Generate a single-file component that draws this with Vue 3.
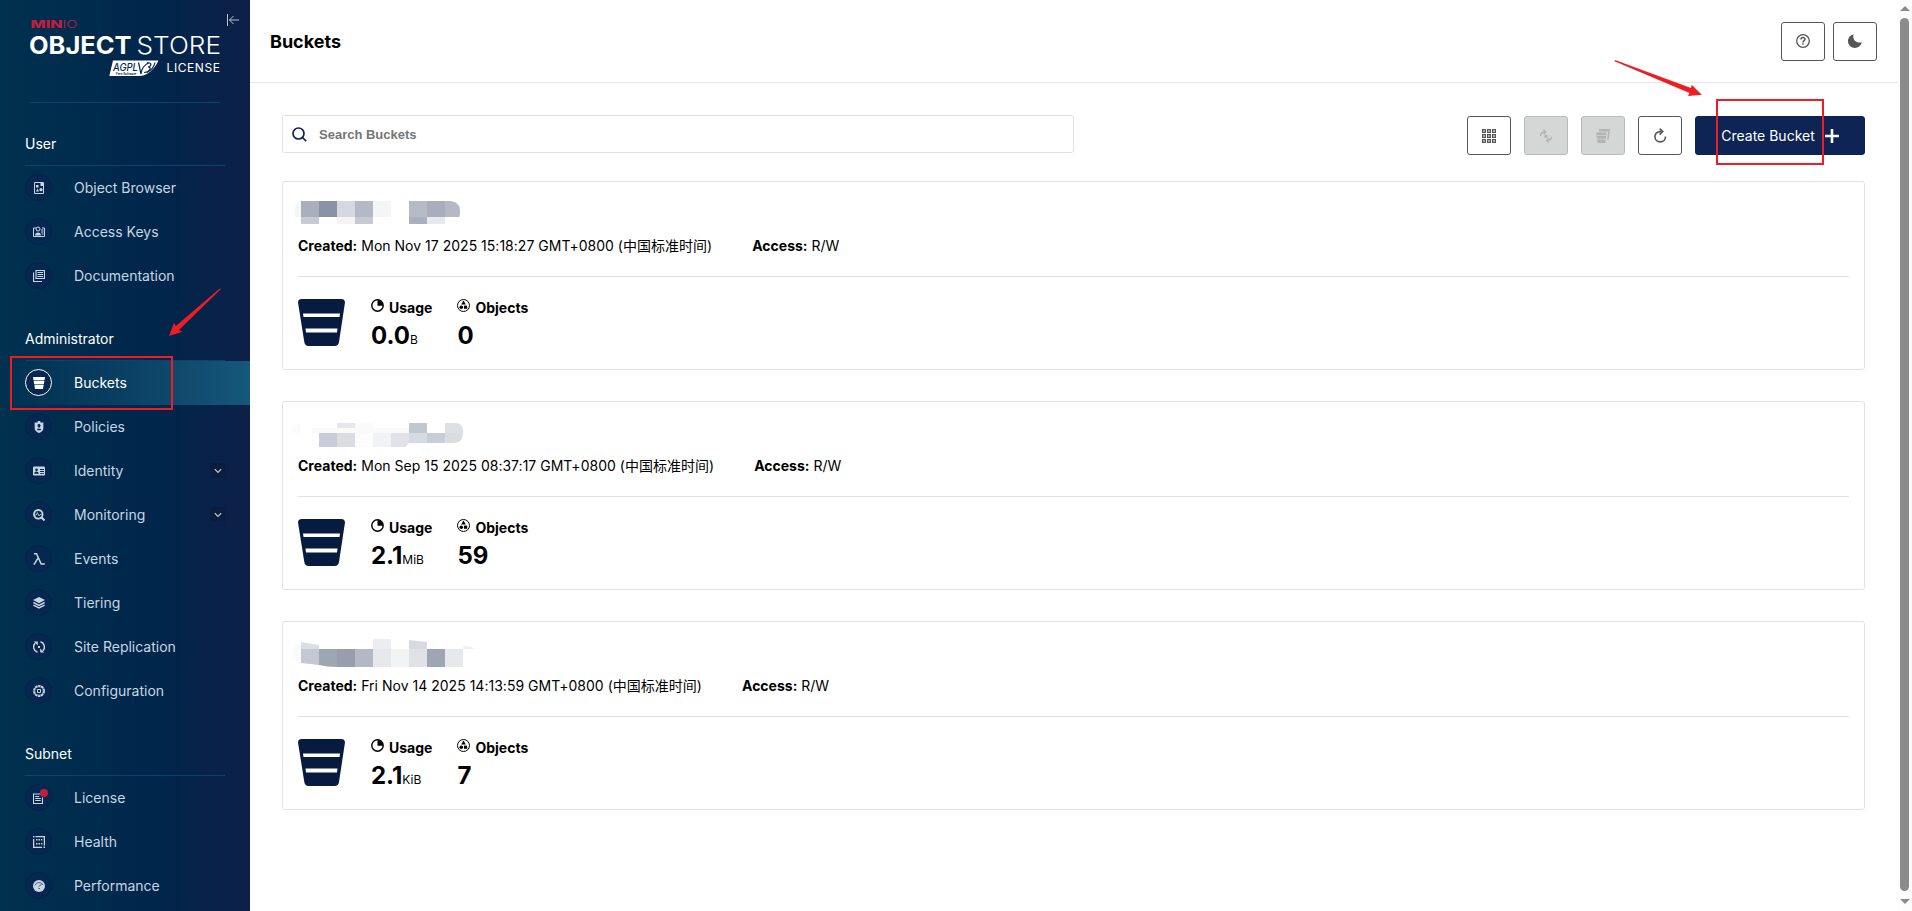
<template>
  <div class="layout">
    <aside class="sidebar">
      <div class="logo-box">
        <svg class="logo" width="190" height="60" viewBox="0 0 190 60">
          <text x="0.500" y="11.500" class="logo-minio heavy" textLength="32" lengthAdjust="spacingAndGlyphs">MIN</text>
          <text x="32.500" y="11.500" class="logo-minio light" textLength="15" lengthAdjust="spacingAndGlyphs">IO</text>
          <text x="-1" y="37.500" class="logo-name heavy" textLength="102.500" lengthAdjust="spacingAndGlyphs">OBJECT</text>
          <text x="106.500" y="37.500" class="logo-name light" textLength="84.500" lengthAdjust="spacingAndGlyphs">STORE</text>
          <path d="M83 44.500h45.500C124 54 117 60 109 60H79.300z" fill="#fff" />
          <text x="83" y="55.200" class="logo-agpl" textLength="25" lengthAdjust="spacingAndGlyphs">AGPL</text>
          <text x="86" y="59" class="logo-free">Free Software</text>
          <path d="M108.500 46.500l2.500 11.500c0-5 4-10 8-11M117 46.800c5-.5 5 3.200 1 4.200c4.500 0 1.500 5.500-4 5.500M125 46.500c-1 5-4 8-8 10" fill="none" stroke="#062a50" stroke-width="1.200" />
          <text x="136.500" y="55.500" class="logo-license" textLength="53.500">LICENSE</text>
        </svg>
        <button class="collapse" type="button" aria-label="collapse">
          <svg width="12" height="12" viewBox="0 0 12 12" fill="none" stroke="#b5c2cf" stroke-width="1">
            <path d="M.5 0v12M2.500 6H12M6.500 2L2.500 6l4 4" />
          </svg>
        </button>
      </div>

      <nav v-for="section in sections" :key="section.title">
        <div class="section-title">{{ section.title }}</div>
        <a
          v-for="item in section.items"
          :key="item.name"
          class="menu-item"
          :class="{ active: item.name === current }"
          @click="current = item.name"
        >
          <span class="menu-icon">
            <svg width="12" height="12" viewBox="0 0 12 12" v-html="icons[item.icon]"></svg>
            <i v-if="item.badge" class="badge"></i>
          </span>
          <span class="menu-label">{{ item.name }}</span>
          <span v-if="item.group" class="expand">
            <svg width="8" height="6" viewBox="0 0 8 6" fill="none" stroke="#c8d3de" stroke-width="1.100">
              <path d="M.8 1.200L4 4.400l3.200-3.200" />
            </svg>
          </span>
        </a>
      </nav>
    </aside>

    <main class="content">
      <header class="page-header">
        <h1>Buckets</h1>
        <div class="header-actions">
          <button class="btn" type="button" aria-label="help">
            <svg width="14" height="14" viewBox="0 0 14 14" fill="none" stroke="#555756" stroke-width="1.300">
              <circle cx="7" cy="7" r="6.300" />
              <path d="M5 5.500c0-2.500 4-2.500 4-.2C9 6.800 7 6.600 7 8.400M7 9.300v1.500" stroke-width="1.500" />
            </svg>
          </button>
          <button class="btn" type="button" aria-label="dark mode">
            <svg width="14" height="14" viewBox="0 0 14 14" fill="#555756">
              <path d="M5.500.2C4.200 5.500 8 9.500 13.900 8.400 12.800 11.800 10 13.900 6.900 13.900 3 13.900 0 10.900 0 7.200 0 3.900 2.200 1 5.500.2z" />
            </svg>
          </button>
        </div>
      </header>

      <section class="page-body">
        <div class="toolbar">
          <div class="search">
            <svg width="15" height="15" viewBox="0 0 15 15" fill="none" stroke="#0d2454" stroke-width="1.700">
              <circle cx="6.500" cy="6.500" r="5.500" />
              <path d="M10.500 10.500l3.700 3.700" />
            </svg>
            <input v-model="filter" placeholder="Search Buckets" />
          </div>
          <div class="actions">
            <button class="btn" type="button" aria-label="grid view">
              <svg width="14" height="14" viewBox="0 0 14 14" fill="none" stroke="#555756" stroke-width="1.300">
                <template v-for="r in 3" :key="r">
                  <rect v-for="c in 3" :key="c" :x="c * 5 - 4.350" :y="r * 5 - 4.350" width="2.700" height="2.700" />
                </template>
              </svg>
            </button>
            <button class="btn" type="button" disabled aria-label="replication">
              <svg width="14" height="14" viewBox="0 0 14 14" fill="none" stroke="#b2b4b3" stroke-width="1.300">
                <path d="M1.500 7C1.500 4.500 3 3 6 3M4.500.8L6.800 3 4.500 5.300M12.500 7.500c0 3-1.700 4-4.500 4M10 9L7.800 11.400 10 13.500" />
                <circle cx="7" cy="7.200" r="1.700" fill="#b2b4b3" stroke="none" />
              </svg>
            </button>
            <button class="btn" type="button" disabled aria-label="lifecycle">
              <svg width="14" height="14" viewBox="0 0 14 14" fill="#b2b4b3">
                <path d="M3 0h11l-1.500 11h-1.300L12 2.500H3zM0 3.500h10.500l-.3 2.700H.3zM.5 7h9.600l-.2 2.700H.9zM1 10.500h8.700L9.300 14H1.500z" />
              </svg>
            </button>
            <button class="btn" type="button" aria-label="refresh">
              <svg width="13" height="15" viewBox="0 0 13 15" fill="none" stroke="#555756" stroke-width="1.600">
                <path d="M7.500 3.600H6.200C3 3.600.9 6 .9 8.600c0 3 2.300 5.300 5.300 5.300s5.300-2.300 5.300-5.300" />
                <path d="M5.600.6l3.100 3-3.100 3" />
              </svg>
            </button>
            <button class="btn primary" type="button">
              <span>Create Bucket</span>
              <svg width="14" height="14" viewBox="0 0 14 14" stroke="#fff" stroke-width="2.600">
                <path d="M7 0v14M0 7h14" />
              </svg>
            </button>
          </div>
        </div>

        <article v-for="bucket in buckets" :key="bucket.created" class="bucket">
          <svg class="bucket-name" width="190" height="34" viewBox="288 0 190 34">
            <path v-for="(b, i) in bucket.blocks" :key="i" :d="b[0]" :fill="b[1]" />
          </svg>
          <div class="bucket-info">
            <span class="created"><b>Created:</b> {{ bucket.created }}</span>
            <span><b>Access:</b> {{ bucket.access }}</span>
          </div>
          <div class="bucket-stats">
            <svg width="47" height="47" viewBox="0 0 47 47">
              <path d="M4 0h39q4.300 0 3.900 4L41 43q-.6 4-4.500 4h-26Q7 47 6.300 43L.1 4Q-.3 0 4 0z" fill="#071a40" />
              <path d="M5 14.500h37l-.5 3.500h-36zM7.500 29.500h32l-.5 4h-31z" fill="#fff" />
            </svg>
            <div class="stat usage">
              <div class="stat-label">
                <svg width="13" height="13" viewBox="0 0 13 13">
                  <circle cx="6.500" cy="6.500" r="5.700" fill="none" stroke="#000" stroke-width="1.400" />
                  <path d="M6.500 6.800V1A5.500 5.500 0 0 1 12 6.800z" />
                </svg>
                Usage
              </div>
              <div class="stat-value">{{ bucket.usage }}<small>{{ bucket.unit }}</small></div>
            </div>
            <div class="stat">
              <div class="stat-label">
                <svg width="13" height="13" viewBox="0 0 13 13">
                  <circle cx="6.500" cy="6.500" r="6" fill="none" stroke="#000" />
                  <path d="M6.500 1.600l2.300 4H4.200z" />
                  <circle cx="4.300" cy="8.200" r="1.800" />
                  <rect x="7" y="6.600" width="3.200" height="3.200" />
                </svg>
                Objects
              </div>
              <div class="stat-value">{{ bucket.objects }}</div>
            </div>
          </div>
        </article>
      </section>
    </main>

    <div class="scrollbar">
      <i class="up"></i>
      <div class="thumb"></div>
      <i class="down"></i>
    </div>

    <!-- marks over the page -->
    <div class="mark mark-menu"></div>
    <div class="mark mark-create"></div>
    <svg class="arrows" width="1912" height="911" viewBox="0 0 1912 911" fill="#ee1c24">
      <path d="M220 288.300L175.800 326l-1.800-3.300-5 13.300 13.500-4.300-3.500-1.700L220.700 289.300z" />
      <path d="M1615 60L1691 88l.7-3.200 10.100 10-13.800 1.300 1.500-3.100L1614.500 61.300z" />
    </svg>
  </div>
</template>

<script setup>
import { ref } from 'vue'

const current = ref('Buckets')
const filter = ref('')

const sections = [
  {
    title: 'User',
    items: [
      { name: 'Object Browser', icon: 'browser' },
      { name: 'Access Keys', icon: 'keys' },
      { name: 'Documentation', icon: 'docs' }
    ]
  },
  {
    title: 'Administrator',
    items: [
      { name: 'Buckets', icon: 'bucket' },
      { name: 'Policies', icon: 'policy' },
      { name: 'Identity', icon: 'identity', group: true },
      { name: 'Monitoring', icon: 'monitoring', group: true },
      { name: 'Events', icon: 'lambda' },
      { name: 'Tiering', icon: 'tiers' },
      { name: 'Site Replication', icon: 'replication' },
      { name: 'Configuration', icon: 'config' }
    ]
  },
  {
    title: 'Subnet',
    items: [
      { name: 'License', icon: 'license', badge: true },
      { name: 'Health', icon: 'health' },
      { name: 'Performance', icon: 'performance' }
    ]
  }
]

const icons = {
  browser:
    '<path d="M1.500.5h9v11h-9z" fill="none" stroke="currentColor"/><path d="M3 3h2.500v2.500H3zM3 9.500l1.500-3 1.500 3zM7.500 1h3v3h-3z"/><circle cx="8" cy="7.700" r="1.600"/>',
  keys:
    '<path d="M3 2H.5v8.500h11V2H9" fill="none" stroke="currentColor"/><circle cx="5" cy="3" r="2" fill="none" stroke="currentColor"/><path d="M2 9.500c0-4 6-4 6 0zM8 3.500h2.500v1H8zM8 5.500h2.500v1H8zM8.500 7.500h2v1h-2z"/>',
  docs:
    '<path d="M3 .5h8.500v8H3zM.5 2.500v9H9" fill="none" stroke="currentColor" stroke-width="1.200"/><path d="M4.500 2h5.500v1H4.500zM4.500 4h5.500v1H4.500zM4.500 6h5.500v1H4.500z"/>',
  bucket:
    '<path d="M0 0h12l-.5 3H.5z"/><path d="M.7 4h10.600l-.4 3H1.100z"/><path d="M1.400 8h9.200L10 12H2z"/><path d="M.6 3h10.800v1H.6zM1.200 7h9.600v1H1.200z" opacity=".4"/>',
  policy:
    '<path d="M4.500 0h3v1.500H11V7c0 2.500-2 4-5 5-3-1-5-2.500-5-5V1.500h3.500z" transform="translate(.8) scale(.87 1)"/><path d="M4.200 8.500h3.600M6 3.200v3.500" stroke="#062450" stroke-width="1.300"/><circle cx="6" cy="4.500" r="1.500" fill="#062450"/>',
  identity:
    '<rect y="1.500" width="12" height="9" rx="1.200"/><circle cx="3.500" cy="4.700" r="1.300" fill="#062450"/><path d="M1.300 8.800c0-3 4.400-3 4.400 0zM7 4h4v1H7zM7 6h4v1H7zM7 8h4v.8H7z" fill="#062450"/>',
  monitoring:
    '<circle cx="5.300" cy="5.300" r="4.300" fill="none" stroke="currentColor" stroke-width="1.800"/><path d="M8.300 8.300l3.200 3.200" stroke="currentColor" stroke-width="2"/><path d="M2 6h1.300l1-2.500L6 7l1-1.500h1.500" fill="none" stroke="currentColor" stroke-width=".8"/>',
  lambda:
    '<path d="M1 .7h2.500l4.700 10.300h3.600M5.300 4.700L.9 11.700" fill="none" stroke="currentColor" stroke-width="1.500"/>',
  tiers:
    '<path d="M6 0l6 3-6 3.200L0 3z"/><path d="M.4 5.500L6 8.300l5.600-2.800M.4 8.200L6 11l5.600-2.800" fill="none" stroke="currentColor" stroke-width="1.500"/>',
  replication:
    '<path d="M4.500 11.200A5.300 5.300 0 0 1 2.200 2.300M7.500.8a5.300 5.300 0 0 1 2.300 8.900" fill="none" stroke="currentColor" stroke-width="1.500"/><path d="M.8.600h4v4zM11.200 11.400h-4v-4zM5 5h2v2H5z"/>',
  config:
    '<circle cx="6" cy="6" r="5.100" fill="none" stroke="currentColor" stroke-width="1.700" stroke-dasharray="2.600 .6"/><circle cx="6" cy="6" r="4.100" fill="none" stroke="currentColor" stroke-width=".6"/><path d="M4.500 4.500h3v3h-3z" fill="none" stroke="currentColor"/>',
  license:
    '<path d="M8 2H.5v9.500h9V5.500" fill="none" stroke="currentColor" stroke-width="1.100"/><path d="M2.200 4h4v1h-4zM2.200 6h5.600v1H2.200zM2.200 8h5.600v1H2.200z"/>',
  health:
    '<path d="M2.500.6h8.900v9M.6 3v8.400H9" fill="none" stroke="currentColor" stroke-width="1.300"/><path d="M0 0h1.500v1.500H0zM10.500 10.500H12V12h-1.500zM3 3h1.500v1.500H3zM5.500 3H7v1.500H5.500zM8 3h1.300v1.500H8zM3 7h1.500v1.500H3zM5.500 7H7v1.500H5.500zM8 7h1.300v1.500H8z"/>',
  performance:
    '<circle cx="6" cy="6" r="6"/><path d="M2 5.500A4.300 4.300 0 0 1 10 5M5.600 6.500L8.500 4.500M5.500 8.500h1.500" fill="none" stroke="#3b5677" stroke-width=".9"/>'
}

// bucket names are masked, each block is [path, color]
const buckets = [
  {
    created: 'Mon Nov 17 2025 15:18:27 GMT+0800 (中国标准时间)',
    access: 'R/W',
    usage: '0.0',
    unit: 'B',
    objects: 0,
    blocks: [
      ['M301 4v16h-6v-9q0-6 6-7z', '#f5f6f8'],
      ['M301 4h18v16h-18z', '#aaafbd'],
      ['M319 4h18v16h-18z', '#8a93a3'],
      ['M337 4h18v16h-18z', '#d5d8e0'],
      ['M355 4h18v16h-18z', '#b5b9c5'],
      ['M373 4h18v16h-18z', '#f4f5f7'],
      ['M409 4h18v16h-18z', '#b4bbc5'],
      ['M427 4h18v16h-18z', '#aaaebc'],
      ['M445 4h6q9 2 9 9v4q0 2-1 3h-14z', '#b6b9c5'],
      ['M301 20h18v7h-18z', '#c7cad5'],
      ['M337 20h18v7h-18z', '#f4f4f7'],
      ['M355 20h18v7h-18z', '#c7cad5'],
      ['M409 20h18v7h-18z', '#aaafbd'],
      ['M427 20h18v7h-18z', '#e8e9ee']
    ]
  },
  {
    created: 'Mon Sep 15 2025 08:37:17 GMT+0800 (中国标准时间)',
    access: 'R/W',
    usage: '2.1',
    unit: 'MiB',
    objects: 59,
    blocks: [
      ['M290 16q1-7 9-9l2 1v8z', '#fbfbfb'],
      ['M312 11h97v5h-97z', '#fafafb'],
      ['M337 6h18v5h-18z', '#e6e7eb'],
      ['M355 6h18v5h-18z', '#fafafb'],
      ['M409 6h18v10h-18z', '#c2c6d0'],
      ['M445 6h11q7 1 7 7v3h-18z', '#dfe0e5'],
      ['M319 16h18v14h-18z', '#c9cdd7'],
      ['M337 16h18v14h-18z', '#d9dde1'],
      ['M355 16h18v14h-18z', '#fcfcfd'],
      ['M373 16h18v14h-18z', '#f1f2f5'],
      ['M391 16h18v10l-4 4h-14z', '#e1e2e8'],
      ['M409 16h18v10h-18z', '#d6dae3'],
      ['M427 16h18v10h-18z', '#c9cdd6'],
      ['M445 16h18q0 10-10 10h-8z', '#d9dde2']
    ]
  },
  {
    created: 'Fri Nov 14 2025 14:13:59 GMT+0800 (中国标准时间)',
    access: 'R/W',
    usage: '2.1',
    unit: 'KiB',
    objects: 7,
    blocks: [
      ['M301 6v20q-8-2-8-10t8-10z', '#fafafb'],
      ['M301 5l18 3v4h-18z', '#dcdfe4'],
      ['M301 12h18v16l-18-2z', '#c4c8d2'],
      ['M319 12h18v18q-9 0-18-2z', '#9ea5b3'],
      ['M337 12h18v18h-18z', '#989eac'],
      ['M355 12h18v18h-18z', '#b4b8c4'],
      ['M373 2h18v10h-18z', '#ecedf1'],
      ['M373 12h18v18h-18z', '#e7e8ec'],
      ['M391 12h18v18h-18z', '#f2f3f5'],
      ['M409 3l18 2v7h-18z', '#d8dae2'],
      ['M409 12h18v18h-18z', '#e1e2e8'],
      ['M427 12h18v18h-18z', '#9ea5b3'],
      ['M445 12h18v18h-18z', '#e7e8ec'],
      ['M463 9q8 0 12 3h-12z', '#eeeff3']
    ]
  }
]
</script>

<style>
body {
  background: #fff;
  overflow: hidden;
}
</style>

<style scoped>
.layout {
  display: flex;
  position: relative;
  width: 100%;
  height: 911px;
  overflow: hidden;
  font-family: Inter, 'Noto Sans CJK SC', sans-serif;
  font-size: 14px;
  color: #000;
}

.layout * {
  box-sizing: border-box;
}

svg {
  display: block;
  flex: none;
}

.sidebar {
  flex: none;
  width: 250px;
  height: 911px;
  overflow: hidden;
  background: linear-gradient(90deg, #00314f 0%, #00264b 60%, #0d2048 100%);
}

.logo-box {
  display: flex;
  position: relative;
  height: 103px;
  margin: 0 30px;
  padding-top: 16px;
  border-bottom: 1px solid #0e416b;
}

.logo text {
  fill: #fff;
}

.logo .heavy {
  font-weight: 700;
}

.logo .light {
  font-weight: 300;
}

.logo .logo-minio {
  font-size: 10.5px;
  fill: #c51b3f;
}

.logo .logo-minio.heavy {
  font-weight: 800;
}

.logo .logo-name {
  font-size: 24.5px;
}

.logo .logo-agpl {
  font-size: 10.5px;
  font-style: italic;
  font-weight: 500;
  fill: #062a50;
}

.logo .logo-free {
  font-size: 3px;
  font-weight: 700;
  fill: #062a50;
}

.logo .logo-license {
  font-size: 12px;
}

.collapse {
  position: absolute;
  top: 14px;
  left: 197px;
  padding: 0;
  border: none;
  background: none;
}

.section-title {
  height: 63px;
  margin: 0 25px;
  padding-top: 32px;
  border-bottom: 1px solid #0e416b;
  line-height: 18px;
  color: #fff;
}

.menu-item {
  display: flex;
  align-items: center;
  height: 44px;
  padding: 0 25px 1px;
  color: #c8d5e3;
  cursor: pointer;
}

.menu-item.active {
  color: #fff;
  background: linear-gradient(90deg, rgba(21, 88, 122, 0) 0%, #15587a 100%);
}

.menu-icon {
  display: flex;
  align-items: center;
  justify-content: center;
  position: relative;
  width: 27px;
  height: 27px;
  margin-right: 22px;
  border: 1px solid #02234b;
  border-radius: 50%;
  background: #062850;
}

.menu-icon svg {
  fill: currentColor;
}

.active .menu-icon {
  border-color: #fff;
}

.badge {
  position: absolute;
  top: 4px;
  left: 14px;
  width: 8px;
  height: 8px;
  border-radius: 50%;
  background: #c51b3f;
}

.menu-label {
  flex: 1;
  line-height: 17px;
}

.expand {
  display: flex;
  align-items: center;
  justify-content: center;
  width: 15px;
  height: 15px;
  border-radius: 2px;
  background: #0b1d3f;
}

.content {
  flex: 1;
}

.page-header {
  display: flex;
  align-items: center;
  justify-content: space-between;
  height: 83px;
  padding: 0 20px;
  border-bottom: 1px solid #e5e5e5;
}

h1 {
  margin: 0;
  font-size: 18px;
  font-weight: 700;
}

.header-actions {
  display: flex;
  gap: 8px;
}

.page-body {
  padding: 32px 32px 0;
}

.toolbar {
  display: flex;
  justify-content: space-between;
  height: 66px;
}

.search {
  display: flex;
  align-items: center;
  width: 792px;
  height: 38px;
  padding-left: 9px;
  border: 1px solid #e2e2e2;
  border-radius: 3px;
}

.search input {
  flex: 1;
  margin-left: 10px;
  padding: 0 2px;
  border: none;
  outline: none;
  font-family: 'Liberation Sans', sans-serif;
  font-size: 13px;
  font-weight: 700;
}

.search input::placeholder {
  color: #767676;
}

.actions {
  display: flex;
  gap: 13px;
  padding-top: 1px;
}

.btn {
  display: flex;
  align-items: center;
  justify-content: center;
  width: 44px;
  height: 39px;
  padding: 0;
  border: 1px solid #555756;
  border-radius: 3px;
  background: #fff;
  font-family: inherit;
  font-size: 14px;
}

.btn:disabled {
  border-color: #b9bbba;
  background: #d5d7d6;
}

.btn.primary {
  gap: 10px;
  width: 170px;
  border-color: #0d2454;
  background: #0d2454;
  color: #fff;
}

.bucket {
  height: 189px;
  margin-bottom: 31px;
  padding: 15px;
  border: 1px solid #e2e2e2;
  border-radius: 3px;
}

.bucket-name {
  margin-left: -10px;
}

.bucket-info {
  display: flex;
  gap: 40px;
  height: 46px;
  padding-top: 6px;
  border-bottom: 1px solid #e2e2e2;
  line-height: 18px;
}

.created {
  letter-spacing: 0.015px;
}

.bucket-stats {
  display: flex;
  padding-top: 22px;
}

.stat {
  margin-left: 25px;
}

.stat.usage {
  margin-left: 26px;
}

.stat-label {
  display: flex;
  gap: 5px;
  line-height: 18px;
  font-weight: 700;
}

.stat-value {
  margin-top: 4px;
  font-size: 24px;
  font-weight: 700;
  line-height: 29px;
}

.stat-value small {
  font-size: 12px;
  font-weight: 400;
}

.scrollbar {
  display: flex;
  flex-direction: column;
  align-items: center;
  width: 15px;
  padding: 6px 0;
  background: #fcfcfc;
}

.thumb {
  width: 9px;
  height: 873px;
  margin: 7px 0 8px;
  border-radius: 5px;
  background: #8b8b8b;
}

.up,
.down {
  border: 5px solid transparent;
  border-top-width: 0;
  border-bottom: 5px solid #8b8b8b;
}

.down {
  border-top: 5px solid #8b8b8b;
  border-bottom-width: 0;
}

.mark {
  position: absolute;
  border: 2px solid #ee1c24;
  pointer-events: none;
}

.mark-menu {
  top: 356px;
  left: 10px;
  width: 163px;
  height: 54px;
}

.mark-create {
  top: 99px;
  left: 1716px;
  width: 108px;
  height: 66px;
}

.arrows {
  position: absolute;
  top: 0;
  left: 0;
  pointer-events: none;
}
</style>
